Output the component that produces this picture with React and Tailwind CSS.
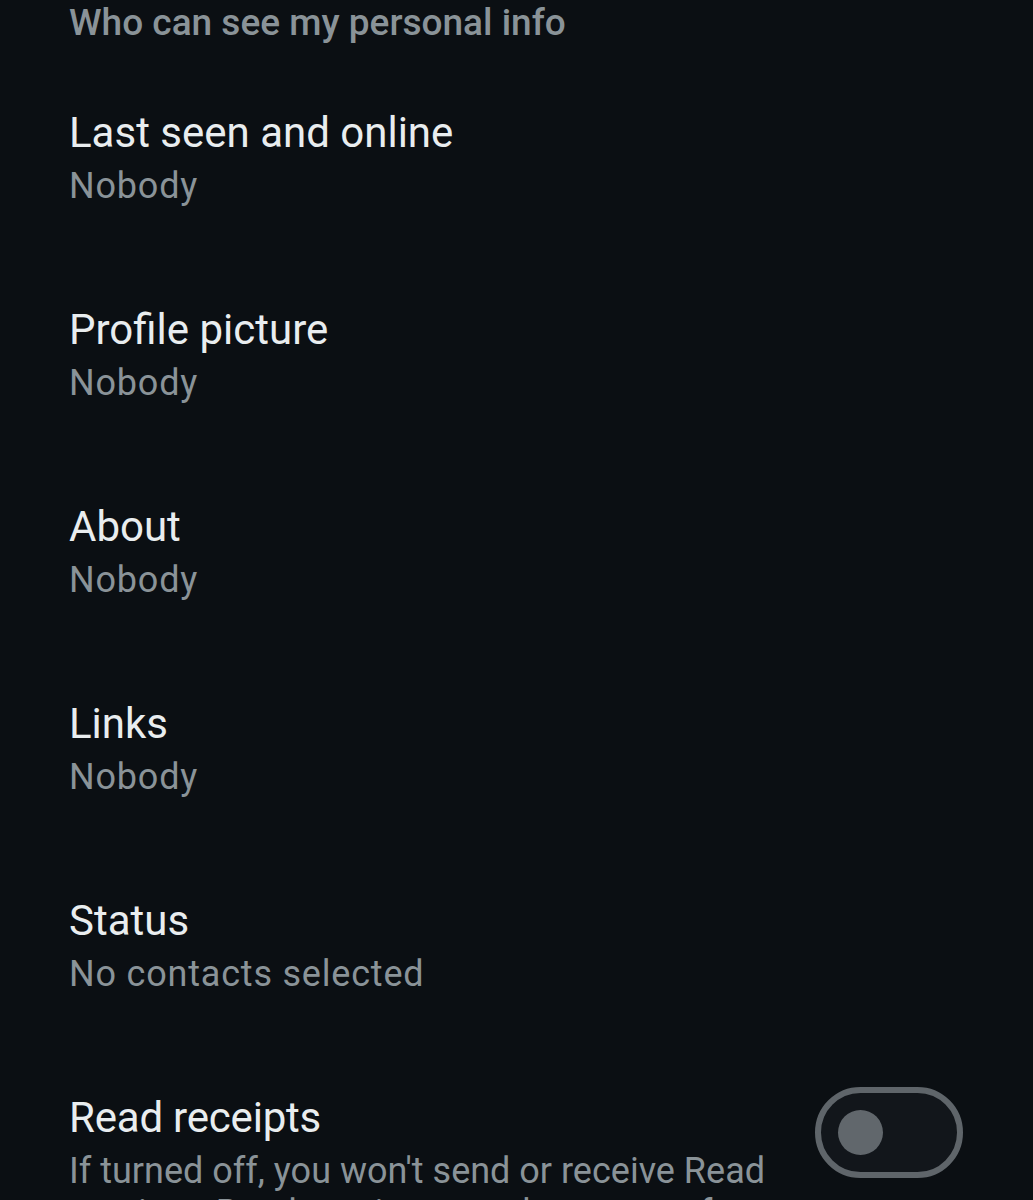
import React from "react";

const rows = [
  { title: "Last seen and online", sub: "Nobody" },
  { title: "Profile picture", sub: "Nobody" },
  { title: "About", sub: "Nobody" },
  { title: "Links", sub: "Nobody" },
  { title: "Status", sub: "No contacts selected" },
];

export default function App() {
  return (
    <div
      className="w-[1033px] h-[1200px] overflow-hidden bg-[#0b0f13] pl-[69px]"
      style={{ fontFamily: "Roboto, 'Noto Sans', sans-serif" }}
    >
      <div className="-mt-[2px] h-[50px] text-[37px] leading-[50px] font-medium text-[#8a9398] mb-[59px]">
        Who can see my personal info
      </div>
      <div className="flex flex-col gap-[93px]">
        {rows.map((r) => (
          <div key={r.title} className="flex flex-col">
            <div className="text-[42px] leading-[52px] text-[#e9edef]">{r.title}</div>
            <div className="mt-[2px] text-[36px] leading-[50px] text-[#8a9398] tracking-[0.8px]">{r.sub}</div>
          </div>
        ))}
        <div className="flex items-start pr-[70px]">
          <div className="flex-1 flex flex-col">
            <div className="text-[42px] leading-[52px] text-[#e9edef] tracking-[-0.2px]">Read receipts</div>
            <div className="mt-[6px] text-[36px] leading-[42px] text-[#8a9398]">
              <div>If turned off, you won't send or receive Read</div>
              <div>receipts. Read receipts are always sent for group chats.</div>
            </div>
          </div>
          <div className="-mt-[5px] w-[148px] h-[91px] rounded-full border-[6px] border-[#5f656a] bg-[#12161b] flex items-center pl-[17px] shrink-0">
            <div className="w-[45px] h-[45px] rounded-full bg-[#61676c]" />
          </div>
        </div>
      </div>
    </div>
  );
}
